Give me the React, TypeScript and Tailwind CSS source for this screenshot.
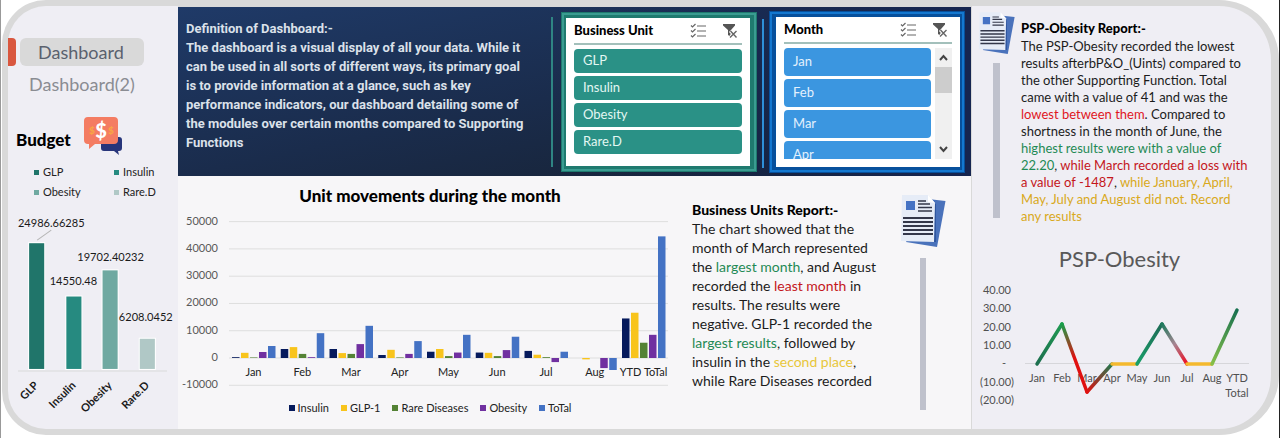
import { ReactNode } from "react";

const months = ["Jan", "Feb", "Mar", "Apr", "May", "Jun", "Jul", "Aug", "YTD ToTal"];

const series = [
  { name: "Insulin", fill: "#061a5c", swatch: "bg-[#061a5c]", values: [300, 3300, 3300, 1100, 2300, 2000, 2600, 0, 14500] },
  { name: "GLP-1", fill: "#f8c41c", swatch: "bg-[#f8c41c]", values: [1900, 4000, 1800, 3000, 3300, 1900, 1200, -500, 16600] },
  { name: "Rare Diseases", fill: "#548235", swatch: "bg-[#548235]", values: [200, 1500, 1500, 200, 700, 700, 300, 0, 5600] },
  { name: "Obesity", fill: "#7030a0", swatch: "bg-[#7030a0]", values: [2200, 300, 5100, 1500, 2000, 2900, -1500, -3700, 8500] },
  { name: "ToTal", fill: "#4472c4", swatch: "bg-[#4472c4]", values: [4400, 9100, 11800, 6200, 8500, 7800, 2300, -4400, 44600] },
];

const budget = [
  { name: "GLP", value: "24986.66285", fill: "#20756a", swatch: "bg-[#20756a]", x: 29, top: 35, labelX: 51, labelY: 19 },
  { name: "Insulin", value: "14550.48", fill: "#268a80", swatch: "bg-[#268a80]", x: 66, top: 88, labelX: 73, labelY: 77 },
  { name: "Obesity", value: "19702.40232", fill: "#6fa9a1", swatch: "bg-[#6fa9a1]", x: 102, top: 62, labelX: 110, labelY: 53 },
  { name: "Rare.D", value: "6208.0452", fill: "#b0c8c6", swatch: "bg-[#b0c8c6]", x: 139, top: 130, labelX: 145, labelY: 112 },
];

function BudgetIcon() {
  return (
    <svg viewBox="0 0 40 40" className="h-10 w-10" aria-hidden="true">
      <path d="M22 21h14q3 0 3 3v8q0 3-3 3h-1l1 4-5-4H21q-3 0-3-3v-8z" fill="#27357a" />
      <path d="M5 1h26q4 0 4 4v19q0 4-4 4H12l-6 5v-5H5q-4 0-4-4V5q0-4 4-4z" fill="#f47c62" />
      <g fontFamily="Lato, sans-serif" fontWeight="900" textAnchor="middle">
        <text x="18" y="21.500" fontSize="20" fill="#fff">$</text>
        <text x="9" y="18" fontSize="10" fill="#f8a545">$</text>
        <text x="28" y="18" fontSize="10" fill="#f8a545">$</text>
      </g>
    </svg>
  );
}

function ReportIcon({ className }: { className: string }) {
  return (
    <svg viewBox="0 0 46 53" className={className} aria-hidden="true">
      <path d="M28 4l17.500 2L37 52 6 47z" fill="#4a72bb" />
      <path d="M32 8l4 1v38l-30-2z" fill="#2f569f" />
      <path d="M2 0h26l7 8-1 39L1 46z" fill="#e6ecf7" />
      <path d="M28 0l7 8-7-1z" fill="#fff" />
      <rect x="6" y="6" width="9" height="9" fill="#4472c4" />
      <path d="M18 6h8M18 9h12M18 12.500h14M18 16h14" stroke="#33374a" strokeWidth="1.500" />
      <path d="M3 23h30M3 27h30M3 31h30M3 35h30M3 39h30" stroke="#33374a" strokeWidth="1.800" />
    </svg>
  );
}

function MultiSelectIcon() {
  return (
    <svg viewBox="0 0 16 16" className="h-4 w-4" fill="none" stroke="#666" aria-hidden="true">
      <path d="M1 2.500l1.500 1.500L5.500 1M1 7.500l1.500 1.500L5.500 6M1 12.500l1.500 1.500L5.500 11" strokeWidth="1.200" />
      <path d="M7 3h9M7 8h9M7 13h9" strokeWidth="1" />
    </svg>
  );
}

function ClearFilterIcon() {
  return (
    <svg viewBox="0 0 16 16" className="h-4 w-4" aria-hidden="true">
      <path d="M1 1h12v1.500L9 7v3.500L7.500 13 6 12V7L1 2.500z" fill="#555" />
      <path d="M8 8l6.500 6.500M14.500 8L8 14.500" stroke="#fff" strokeWidth="3" />
      <path d="M8.500 8l6 6.500M14.500 8L8 14.500" stroke="#666" strokeWidth="1.400" />
    </svg>
  );
}

function SlicerHeader({ title }: { title: string }) {
  return (
    <header className="flex h-[23px] items-center gap-4 border-b-2 border-[#a3c0bb] pr-1 pb-1">
      <h2 className="flex-1 text-[13px] font-black text-black">{title}</h2>
      <button type="button" aria-label="Multi-select"><MultiSelectIcon /></button>
      <button type="button" aria-label="Clear filter"><ClearFilterIcon /></button>
    </header>
  );
}

function Divider({ className }: { className: string }) {
  return <div className={"shrink-0 " + className} />;
}

function Sidebar() {
  return (
    <aside className="flex w-[176px] shrink-0 flex-col rounded-l-[44px] border-y-[6px] border-l-[6px] border-[#d9d9d9] bg-[#efeef4]">
      <nav className="flex flex-col pt-8">
        <div className="flex items-center gap-1">
          <span className="h-7 w-2 rounded-r bg-[#d9573f]" />
          <a href="#dashboard" className="flex h-7 w-[124px] items-center rounded-md bg-[#d9d9d9] pl-[18px] text-[18px] text-[#5a616e]">Dashboard</a>
        </div>
        <a href="#dashboard-2" className="pt-[2px] pl-[21px] text-[18px] leading-8 text-[#8a8c92]">Dashboard(2)</a>
      </nav>
      <div className="flex items-center gap-3 pt-4 pl-2">
        <h2 className="pt-2 text-[17px] font-black text-black">Budget</h2>
        <BudgetIcon />
      </div>
      <ul className="grid grid-cols-[80px_1fr] gap-y-1 pt-2 pl-[26px] text-[11px] leading-4 text-[#222]">
        {budget.map((b) => (
          <li key={b.name} className="flex items-center gap-1">
            <span className={"h-[5px] w-[5px] " + b.swatch} />
            {b.name}
          </li>
        ))}
      </ul>
      <svg viewBox="8 0 169 210" className="mt-2 w-full" role="img" aria-label="Budget by unit" fontFamily="Lato, sans-serif" fontSize="11" fill="#1a1a1a">
        <path d="M18 162h148" stroke="#d9d9d9" />
        <path d="M37 32l14-10" stroke="#b5b5b5" />
        {budget.map((b) => (
          <g key={b.name}>
            <rect x={b.x - 1} y={b.top - 1} width="17" height={162 - b.top} fill="#fff" />
            <rect x={b.x} y={b.top} width="15" height={160 - b.top} fill={b.fill} />
            <text x={b.labelX} y={b.labelY} textAnchor="middle">{b.value}</text>
            <text x={b.x + 10} y="177" textAnchor="end" fontWeight="700" transform={`rotate(-45 ${b.x + 10} 177)`}>{b.name}</text>
          </g>
        ))}
      </svg>
    </aside>
  );
}

function TopBand() {
  return (
    <section className="flex h-[169px] bg-linear-to-br from-[#1f3a68] via-[#1a2c4c] to-[#16202f]">
      <div className="flex-1 pt-3 pl-2 font-['Roboto',sans-serif] text-[13px] leading-[19px] font-bold text-[#dbe1ea]">
        <h2>Definition of Dashboard:-</h2>
        <p>
          The dashboard is a visual display of all your data. While it<br />
          can be used in all sorts of different ways, its primary goal<br />
          is to provide information at a glance, such as key<br />
          performance indicators, our dashboard detailing some of<br />
          the modules over certain months compared to Supporting<br />
          Functions
        </p>
      </div>
      <div className="flex shrink-0 bg-linear-to-r from-transparent to-[#162550] pr-[6px]">
        <Divider className="mt-[10px] mr-2 h-[150px] w-[2px] bg-[#2f8583]" />
        <section className="mt-[5px] h-[160px] w-[196px] border-y-[6px] border-r-[7px] border-l-[5px] border-[#1f7a6f] bg-white px-2 pt-1 outline-2 outline-offset-[-3px] outline-[#3a9c91]">
          <SlicerHeader title="Business Unit" />
          <div className="flex flex-col gap-[3px] pt-1">
            {["GLP", "Insulin", "Obesity", "Rare.D"].map((n) => (
              <button key={n} type="button" className="h-6 rounded bg-[#2a9186] pl-[9px] text-left text-[13px] text-[#e3f7f3]">{n}</button>
            ))}
          </div>
        </section>
        <Divider className="mx-[5px] mt-3 h-[149px] w-[2px] bg-[#2e8fd8]" />
        <section className="mt-1 h-[162px] w-[196px] border-y-[6px] border-r-[5px] border-l-[7px] border-[#07509c] bg-white px-2 pt-1 outline-2 outline-offset-[-3px] outline-[#1478d0]">
          <SlicerHeader title="Month" />
          <div className="flex h-[115px] gap-1 pt-1">
            <div className="flex flex-1 flex-col gap-[3px] overflow-hidden">
              {["Jan", "Feb", "Mar", "Apr"].map((n) => (
                <button key={n} type="button" className="h-7 shrink-0 rounded bg-[#3b96e0] pl-[9px] text-left text-[13px] text-[#e3f1fd]">{n}</button>
              ))}
            </div>
            <div className="flex w-[17px] flex-col items-center bg-[#f0f0f0]">
              <svg viewBox="0 0 17 19" className="h-[19px] w-full" fill="none" stroke="#444" strokeWidth="2" aria-hidden="true"><path d="M5 12l3.500-4 3.500 4" /></svg>
              <div className="h-[26px] w-full bg-[#cdcdcd]" />
              <svg viewBox="0 0 17 19" className="mt-auto h-[19px] w-full" fill="none" stroke="#444" strokeWidth="2" aria-hidden="true"><path d="M5 7l3.500 4 3.500-4" /></svg>
            </div>
          </div>
        </section>
      </div>
    </section>
  );
}

function UnitChart() {
  const zero = 150;
  const scale = 27.27 / 10000;
  return (
    <figure className="min-w-0 flex-1 pt-2">
      <figcaption className="text-center text-[17px] leading-6 font-black text-black">Unit movements during the month</figcaption>
      <svg viewBox="0 0 504 188" className="w-full" role="img" aria-label="Unit movements during the month" fontFamily="Lato, sans-serif" fontSize="11">
        {[50000, 40000, 30000, 20000, 10000, 0, -10000].map((v) => (
          <g key={v}>
            <path d={`M51 ${zero - v * scale}H490`} stroke="#dedede" />
            <text x="40" y={zero - v * scale + 3} textAnchor="end" fill="#595959">{v}</text>
          </g>
        ))}
        {series.map((s, i) =>
          s.values.map((v, m) => (
            <rect key={s.name + m} x={54 + i * 9 + m * 48.75} y={v >= 0 ? zero - v * scale : zero} width="7.500" height={Math.abs(v) * scale} fill={s.fill} />
          ))
        )}
        {months.map((m, i) => (
          <text key={m} x={75.5 + i * 48.75} y="168" textAnchor="middle" fill="#222">{m}</text>
        ))}
      </svg>
      <ul className="flex justify-center gap-3 pt-1 text-[11px] leading-4 text-[#222]">
        {series.map((s) => (
          <li key={s.name} className="flex items-center gap-[3px]">
            <span className={"h-[6px] w-[6px] " + s.swatch} />
            {s.name}
          </li>
        ))}
      </ul>
    </figure>
  );
}

function Mark({ tone, children }: { tone: string; children: ReactNode }) {
  return <span className={tone}>{children}</span>;
}

function UnitsReport() {
  return (
    <section className="flex w-[289px] shrink-0 pl-[10px]">
      <div className="w-[204px] shrink-0 pt-6 text-[14px] leading-[19px] whitespace-nowrap text-[#1c1c1c]">
        <h2 className="font-black text-black">Business Units Report:-</h2>
        <p>
          The chart showed that the<br />
          month of March represented<br />
          the <Mark tone="text-[#1f8a55]">largest month</Mark>, and August<br />
          recorded the <Mark tone="text-[#c4161c]">least month</Mark> in<br />
          results. The results were<br />
          negative. GLP-1 recorded the<br />
          <Mark tone="text-[#1f8a55]">largest results</Mark>, followed by<br />
          insulin in the <Mark tone="text-[#e8c63a]">second place</Mark>,<br />
          while Rare Diseases recorded
        </p>
      </div>
      <div className="flex flex-col items-center gap-[10px] pt-[19px] pl-1">
        <ReportIcon className="h-[53px] w-[46px]" />
        <Divider className="h-[152px] w-[6px] bg-[#bfc1cc]" />
      </div>
    </section>
  );
}

const points = [
  { label: "Jan", x: 65, y: 84 },
  { label: "Feb", x: 90, y: 44 },
  { label: "Mar", x: 115, y: 112 },
  { label: "Apr", x: 140, y: 84 },
  { label: "May", x: 165, y: 84 },
  { label: "Jun", x: 190, y: 44 },
  { label: "Jul", x: 215, y: 84 },
  { label: "Aug", x: 240, y: 84 },
  { label: "YTD", x: 265, y: 30 },
];

const segmentColours = [
  ["#1d6f4f", "#1f9a52"],
  ["#17a04a", "#e01010", "#e01010"],
  ["#e01010", "#1d7a50"],
  ["#f4b92e", "#f4b92e"],
  ["#19a06a", "#1d6a55"],
  ["#1d7a5c", "#a58592", "#f00a20"],
  ["#f4b92e", "#f4b92e"],
  ["#86c04a", "#17704f"],
];

function ObesityChart() {
  return (
    <svg viewBox="0 0 299 128" className="mt-[5px] w-full" role="img" aria-label="PSP-Obesity" fontFamily="Lato, sans-serif" fontSize="11" fill="#505050">
      <defs>
        {segmentColours.map((cols, i) => (
          <linearGradient key={i} id={`segment-${i}`} gradientUnits="userSpaceOnUse" x1={points[i].x} y1={points[i].y} x2={points[i + 1].x} y2={points[i + 1].y}>
            {cols.map((c, k) => (
              <stop key={k} offset={k / (cols.length - 1)} stopColor={c} />
            ))}
          </linearGradient>
        ))}
      </defs>
      <path d="M53 83.500H277" stroke="#d6d6da" />
      {["40.00", "30.00", "20.00", "10.00", "-", "(10.00)", "(20.00)"].map((t, i) => (
        <text key={t} x={i > 4 ? 42 : i === 4 ? 34 : 39} y={14 + i * 18.3} textAnchor="end">{t}</text>
      ))}
      {points.map((p) => (
        <text key={p.label} x={p.x} y="102" textAnchor="middle">{p.label}</text>
      ))}
      <text x="265" y="117" textAnchor="middle">Total</text>
      {segmentColours.map((_, i) => (
        <path key={i} d={`M${points[i].x} ${points[i].y}L${points[i + 1].x} ${points[i + 1].y + 0.01}`} stroke={`url(#segment-${i})`} strokeWidth="3.500" strokeLinecap="round" />
      ))}
    </svg>
  );
}

function ObesityPanel() {
  return (
    <aside className="flex w-[308px] shrink-0 flex-col rounded-r-[60px] border-y-[6px] border-r-8 border-l border-[#d9d9d9] bg-[#efeef4]">
      <div className="flex gap-[6px] pt-[6px] pl-[6px]">
        <div className="flex flex-col items-center gap-2">
          <ReportIcon className="h-[43px] w-[37px]" />
          <Divider className="h-[155px] w-[7px] bg-[#bfc1cc]" />
        </div>
        <div className="pt-2 text-[13px] leading-[17px] whitespace-nowrap text-[#1c1c1c]">
          <h2 className="pb-px font-black text-black">PSP-Obesity Report:-</h2>
          <p>
            The PSP-Obesity recorded the lowest<br />
            results afterbP&amp;O_(Uints) compared to<br />
            the other Supporting Function. Total<br />
            came with a value of 41 and was the<br />
            <Mark tone="text-[#e0161e]">lowest between them</Mark>. Compared to<br />
            shortness in the month of June, the<br />
            <Mark tone="text-[#1f8a55]">highest results were with a value of<br />22.20</Mark>, <Mark tone="text-[#c4161c]">while March recorded a loss with<br />a value of -1487</Mark>, <Mark tone="text-[#d9a91c]">while January, April,<br />May, July and August did not. Record<br />any results</Mark>
          </p>
        </div>
      </div>
      <h2 className="pt-[18px] pr-1 text-center text-[22px] leading-8 text-[#595959]">PSP-Obesity</h2>
      <ObesityChart />
    </aside>
  );
}

export default function App() {
  return (
    <div className="flex min-h-screen border-r border-l border-r-[#222] border-l-[#999] bg-white pb-[3px] pl-px font-['Lato',sans-serif]">
      <Sidebar />
      <main className="flex min-w-0 flex-1 flex-col border-t-[7px] border-b-[6px] border-[#d9d9d9] bg-[#f7f6f8]">
        <TopBand />
        <div className="flex flex-1">
          <UnitChart />
          <UnitsReport />
        </div>
      </main>
      <ObesityPanel />
    </div>
  );
}
